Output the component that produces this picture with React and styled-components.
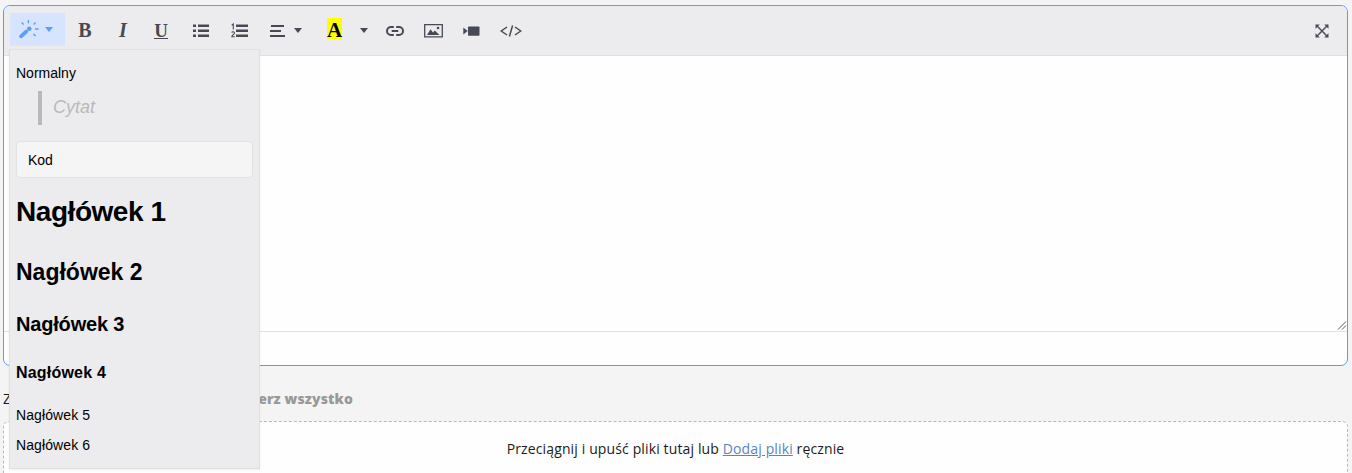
import React from "react";
import styled, { createGlobalStyle, css } from "styled-components";

const GlobalStyle = createGlobalStyle`
  * { box-sizing: border-box; }
  html, body { margin: 0; height: 100%; overflow: hidden; background: #f4f4f4; }
  body { font: 14px "Open Sans", sans-serif; color: #1b1b1b; }
`;

const Page = styled.main`
  position: relative;
  height: 473px;
  padding: 5px 4px 0 3px;
  overflow: hidden;
`;

const Editor = styled.section`
  height: 361px;
  display: flex;
  flex-direction: column;
  border: 1px solid #5c9cf0;
  border-radius: 7px;
  background: #fefefe;
  overflow: hidden;
`;

const Toolbar = styled.div`
  height: 50px;
  flex: none;
  display: flex;
  align-items: flex-start;
  padding: 7px 6px 0 6px;
  background: #ececee;
  border-bottom: 1px solid #e0e0e0;
`;

const Tool = styled.button`
  width: ${(p) => p.$width || 38}px;
  height: 33px;
  margin: 0 0 0 ${(p) => p.$gap || 0}px;
  padding: 1px 0 0;
  flex: none;
  display: flex;
  align-items: center;
  justify-content: center;
  gap: ${(p) => p.$inner || 0}px;
  border: 0;
  color: #474a54;
  background: transparent;
  svg { display: block; flex: none; margin-top: 1px; }
  ${(p) =>
    p.$active &&
    css`
      padding: 0 4px 0 0;
      color: #5c9dfb;
      background: #d6e4ff;
      svg { margin-top: 0; }
    `}
`;

const Letter = styled.span`
  font: ${(p) => (p.$italic ? "italic " : "")}bold 20px/22px "Liberation Serif", serif;
`;

const Underlined = styled(Letter)`
  height: 18px;
  line-height: 19px;
  border-bottom: 1px solid currentColor;
  font-size: 19px;
`;

const Highlight = styled.span`
  width: 15px;
  height: 21px;
  margin-top: -3px;
  display: flex;
  justify-content: center;
  background: #ffff00;
  color: #000;
  font: bold 21px/25px "Liberation Serif", serif;
`;

const Spacer = styled.span`
  flex: 1;
`;

const TextArea = styled.div`
  flex: 1;
  display: flex;
  align-items: flex-end;
  justify-content: flex-end;
  border-bottom: 1px solid #e0e0e0;
  svg { display: block; }
`;

const StatusBar = styled.div`
  height: 33px;
  flex: none;
`;

const Attachments = styled.div`
  width: 350px;
  height: 55px;
  display: flex;
  justify-content: space-between;
  align-items: center;
  padding-top: 9px;
`;

const SelectAll = styled.span`
  font-weight: 800;
  letter-spacing: 0.12px;
  color: #999;
`;

const DropZone = styled.div`
  height: 90px;
  padding-top: 17px;
  border: 1px dashed #b8b8b8;
  border-radius: 6px;
  background: #fefefe;
  text-align: center;
  line-height: 20px;
  letter-spacing: 0.13px;
`;

const AddLink = styled.a`
  color: #5b83c4;
  text-decoration: underline;
`;

const Menu = styled.div`
  position: absolute;
  left: 9px;
  top: 49px;
  width: 251px;
  height: 420px;
  padding: 8px 6px;
  border: 1px solid #e0e0e0;
  background: #ececee;
  color: #000;
  font: 14px "Liberation Sans", Arial, sans-serif;
  box-shadow: 0 1px 2px rgba(0, 0, 0, 0.06);
`;

const MenuItem = styled.div`
  height: ${(p) => p.$height || 30}px;
  display: flex;
  align-items: center;
  font-size: ${(p) => p.$size || 14}px;
  font-weight: ${(p) => (p.$bold ? 700 : 400)};
  letter-spacing: ${(p) => p.$spacing || 0}px;
  white-space: nowrap;
`;

const Quote = styled.div`
  height: 34px;
  margin: 3px 0 16px 22px;
  padding-left: 11px;
  border-left: 4px solid #b9b9bb;
  color: #b9b9bb;
  font-size: 18px;
  font-style: italic;
  line-height: 32px;
`;

const Code = styled.div`
  height: 37px;
  padding-left: 11px;
  border: 1px solid #e2e2e2;
  border-radius: 4px;
  background: #f5f5f5;
  line-height: 36px;
`;

const HeadingFive = styled(MenuItem)`
  margin-top: 4px;
`;

const Caret = () => (
  <svg width="8" height="5" viewBox="0 0 8 5"><path d="M0 0h8L4 5z" fill="currentColor" /></svg>
);

const Wand = () => (
  <svg width="21" height="20" viewBox="0 0 21 20" fill="none" stroke="currentColor">
    <path d="M3 16.3 8.2 11.6" strokeWidth="3.8" strokeLinecap="round" />
    <circle cx="11.3" cy="8.7" r="2.3" fill="currentColor" stroke="none" />
    <path d="M10.4 0v3.2M3.7 2.6l2 2M17.6 2.6l-2 2M17 9h3.6M15.5 14l2.1 2.1" strokeWidth="1.4" />
  </svg>
);

const BulletList = () => (
  <svg width="16" height="14" viewBox="0 0 16 14" fill="currentColor">
    <path d="M0 .5h3V3H0zM0 5.5h3V8H0zM0 10.5h3V13H0zM5 .5h11V3H5zM5 5.5h11V8H5zM5 10.5h11V13H5z" />
  </svg>
);

const NumberList = () => (
  <svg width="17" height="16" viewBox="0 0 17 16" fill="currentColor">
    <path d="M5 1.5h12V4H5zM5 6.5h12V9H5zM5 11.5h12V14H5z" />
    <path d="M.7 2.3 2.3 1v5.5M.8 9.7C1 8.4 3.5 8.4 3.5 10c0 1.2-2.7 2.3-2.7 3.8h3" fill="none" stroke="currentColor" strokeWidth="1.1" />
  </svg>
);

const Align = () => (
  <svg width="15" height="12" viewBox="0 0 15 12" fill="currentColor">
    <path d="M1 0h13v2H1zM0 5h11v2H0zM0 10h15v2H0z" />
  </svg>
);

const LinkIcon = () => (
  <svg width="18" height="10" viewBox="0 0 18 10" fill="none" stroke="currentColor" strokeWidth="2">
    <path d="M7.8 1H5a4 4 0 0 0 0 8h2.8M10.2 1H13a4 4 0 0 1 0 8h-2.8M5.7 5h6.6" />
  </svg>
);

const Picture = () => (
  <svg width="19" height="14" viewBox="0 0 19 14">
    <path d="M.7.7h17.6v12.1H.7z" fill="none" stroke="currentColor" strokeWidth="1.3" />
    <path d="m3 11 3.5-5.7L9 8.5l1.8-2L15.5 11z" fill="currentColor" />
    <circle cx="14" cy="4" r="1.3" fill="currentColor" />
  </svg>
);

const Video = () => (
  <svg width="17" height="10" viewBox="0 0 17 10" fill="currentColor">
    <rect x="5" y=".5" width="11.5" height="9.2" rx=".8" />
    <path d="M.3 1.5 4.7 5 .3 8.5z" />
  </svg>
);

const Source = () => (
  <svg width="22" height="12" viewBox="0 0 22 12" fill="none" stroke="currentColor" strokeWidth="1.5">
    <path d="M7 2 1.2 6 7 10M15 2l5.8 4-5.8 4M12.6.5 9.4 11.5" />
  </svg>
);

const Expand = () => (
  <svg width="14" height="14" viewBox="0 0 14 14" fill="currentColor">
    <path d="M1.8 1.8l10.4 10.4M12.2 1.8 1.8 12.2" stroke="currentColor" strokeWidth="1.4" />
    <path d="M.5.5h4.3L.5 4.8zM13.5.5v4.3L9.2.5zM.5 13.5V9.2l4.3 4.3zM13.5 13.5H9.2l4.3-4.3z" />
  </svg>
);

const ResizeGrip = () => (
  <svg width="10" height="10" viewBox="0 0 10 10" fill="none" stroke="#555" strokeWidth="1">
    <path d="M1 8.5l8-8M5 8.5l4-4" />
  </svg>
);

export default function App() {
  return (
    <>
      <GlobalStyle />
      <Page>
        <Editor>
          <Toolbar>
            <Tool $width={55} $active $inner={6}><Wand /><Caret /></Tool>
            <Tool $gap={1}><Letter>B</Letter></Tool>
            <Tool><Letter $italic>I</Letter></Tool>
            <Tool><Underlined>U</Underlined></Tool>
            <Tool $gap={2}><BulletList /></Tool>
            <Tool><NumberList /></Tool>
            <Tool $width={55} $inner={9}><Align /><Caret /></Tool>
            <Tool $width={43}><Highlight>A</Highlight></Tool>
            <Tool $width={16}><Caret /></Tool>
            <Tool $gap={4}><LinkIcon /></Tool>
            <Tool><Picture /></Tool>
            <Tool><Video /></Tool>
            <Tool $gap={2}><Source /></Tool>
            <Spacer />
            <Tool><Expand /></Tool>
          </Toolbar>
          <TextArea><ResizeGrip /></TextArea>
          <StatusBar />
        </Editor>
        <Attachments>
          <span>Załączniki</span>
          <SelectAll>Wybierz wszystko</SelectAll>
        </Attachments>
        <DropZone>
          Przeciągnij i upuść pliki tutaj lub <AddLink>Dodaj pliki</AddLink> ręcznie
        </DropZone>
        <Menu>
          <MenuItem>Normalny</MenuItem>
          <Quote>Cytat</Quote>
          <Code>Kod</Code>
          <MenuItem $height={68} $size={28} $spacing={-0.45} $bold>Nagłówek 1</MenuItem>
          <MenuItem $height={52} $size={23} $bold>Nagłówek 2</MenuItem>
          <MenuItem $height={52} $size={20} $spacing={-0.18} $bold>Nagłówek 3</MenuItem>
          <MenuItem $height={46} $size={16} $spacing={0.2} $bold>Nagłówek 4</MenuItem>
          <HeadingFive $spacing={0.1}>Nagłówek 5</HeadingFive>
          <MenuItem $spacing={0.1}>Nagłówek 6</MenuItem>
        </Menu>
      </Page>
    </>
  );
}
